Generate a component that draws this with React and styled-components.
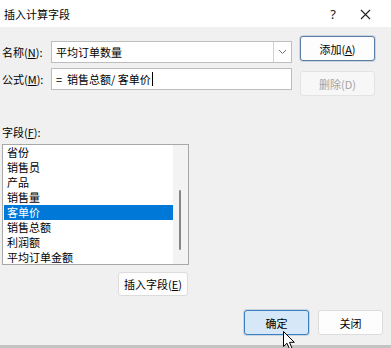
import styled, { createGlobalStyle } from "styled-components";

// ----------- Global -----------
const GlobalStyle = createGlobalStyle`
  html, body {
    margin: 0;
    padding: 0;
    background: #f0f0f0;
  }
  body {
    font-family: "Noto Sans CJK SC", "Noto Sans", "Liberation Sans", sans-serif;
    font-size: 11px;
    color: #000;
  }
`;

// ----------- Styled components -----------
const Dialog = styled.div`
  width: 391px;
  height: 348px;
  display: flex;
  flex-direction: column;
  overflow: hidden;
  position: relative;
`;

const TitleBar = styled.div`
  height: 27px;
  background: #ffffff;
  display: flex;
  align-items: center;
  padding-left: 4px;
  box-sizing: border-box;
`;

const Title = styled.div`
  flex: 1;
  font-size: 11px;
`;

const TitleIcon = styled.div`
  width: ${(p) => p.w}px;
  text-align: center;
  font-size: ${(p) => p.size}px;
  font-family: "Noto Sans", sans-serif;
  color: #222;
`;

const Body = styled.div`
  flex: 1;
  background: #f0f0f0;
  display: flex;
  flex-direction: column;
  padding-left: 2px;
  position: relative;
`;

const TopSection = styled.div`
  display: flex;
`;

const FormRows = styled.div`
  display: flex;
  flex-direction: column;
  gap: 5px;
  padding-top: 14px;
`;

const FormRow = styled.div`
  display: flex;
  align-items: center;
`;

const Label = styled.label`
  width: 49px;
  white-space: nowrap;
  u {
    text-decoration: underline;
  }
`;

const Field = styled.div`
  width: 241px;
  height: 22px;
  box-sizing: border-box;
  background: #fff;
  border: 1px solid #bdbdbd;
  display: flex;
  align-items: center;
`;

const FieldText = styled.div`
  flex: 1;
  padding-left: 4px;
  white-space: nowrap;
  display: flex;
  align-items: center;
`;

const Caret = styled.span`
  display: inline-block;
  width: 1px;
  height: 14px;
  background: #000;
  margin-left: 1px;
`;

const DropPart = styled.div`
  width: 17px;
  height: 100%;
  border-left: 1px solid #d0d0d0;
  display: flex;
  align-items: center;
  justify-content: center;
`;

const SideButtons = styled.div`
  display: flex;
  flex-direction: column;
  gap: 10px;
  padding-top: 9px;
  margin-left: 8px;
`;

const Button = styled.button`
  width: ${(p) => p.w || 75}px;
  height: ${(p) => p.h || 25}px;
  box-sizing: border-box;
  font-family: inherit;
  font-size: 11px;
  padding: 0;
  border-radius: 3px;
  background: ${(p) => (p.hot ? "#d6e8f8" : p.disabled ? "#f7f7f7" : "#fdfdfd")};
  border: 1px solid
    ${(p) => (p.hot ? "#3c7fc0" : p.primary ? "#5b7da3" : p.disabled ? "#e3e3e3" : "#dcdcdc")};
  color: ${(p) => (p.disabled ? "#a3a3a3" : "#000")};
  box-shadow: ${(p) => (p.primary || p.hot ? "0 0 0 1px rgba(90,130,180,0.25)" : "none")};
  u {
    text-decoration: underline;
  }
`;

const FieldsLabel = styled.div`
  margin-top: 28px;
  height: 16px;
  line-height: 16px;
  u {
    text-decoration: underline;
  }
`;

const ListBox = styled.div`
  margin-top: 4px;
  width: 187px;
  height: 121px;
  box-sizing: border-box;
  border: 1px solid #a8a8a8;
  background: #fff;
  display: flex;
`;

const ListItems = styled.div`
  flex: 1;
  display: flex;
  flex-direction: column;
  padding-left: 1px;
`;

const ListItem = styled.div`
  height: 15px;
  line-height: 15px;
  padding-left: 3px;
  white-space: nowrap;
  background: ${(p) => (p.selected ? "#0078d7" : "transparent")};
  color: ${(p) => (p.selected ? "#fff" : "#000")};
`;

const ScrollTrack = styled.div`
  width: 15px;
  background: #f3f3f3;
  position: relative;
`;

const ScrollThumb = styled.div`
  position: absolute;
  left: 6px;
  top: 45px;
  width: 2px;
  height: 60px;
  border-radius: 1px;
  background: #868686;
`;

const InsertRow = styled.div`
  width: 186px;
  display: flex;
  justify-content: flex-end;
  margin-top: 7px;
`;

const BottomRow = styled.div`
  display: flex;
  justify-content: flex-end;
  gap: 9px;
  padding-right: 8px;
  margin-top: 14px;
`;

const BottomEdge = styled.div`
  position: absolute;
  left: 0;
  right: 0;
  bottom: 0;
  height: 3px;
  background: #c4c4c4;
`;

const Pointer = styled.svg`
  position: absolute;
  left: 283px;
  top: 331px;
`;

// ------------ Data ------------------
const fields = ["省份", "销售员", "产品", "销售量", "客单价", "销售总额", "利润额", "平均订单金额"];

// ------------ App Component ------------------
const App = () => {
  return (
    <>
      <GlobalStyle />
      <Dialog>
        <TitleBar>
          <Title>插入计算字段</Title>
          <TitleIcon w={12} size={13}>?</TitleIcon>
          <TitleIcon w={52} size={17}>
            <svg width="11" height="11" viewBox="0 0 11 11">
              <path d="M1 1 L10 10 M10 1 L1 10" stroke="#222" strokeWidth="1.1" />
            </svg>
          </TitleIcon>
        </TitleBar>
        <Body>
          <TopSection>
            <FormRows>
              <FormRow>
                <Label>
                  名称(<u>N</u>):
                </Label>
                <Field>
                  <FieldText>平均订单数量</FieldText>
                  <DropPart>
                    <svg width="9" height="6" viewBox="0 0 9 6">
                      <path d="M1 1 L4.5 4.5 L8 1" fill="none" stroke="#777" strokeWidth="1" />
                    </svg>
                  </DropPart>
                </Field>
              </FormRow>
              <FormRow>
                <Label>
                  公式(<u>M</u>):
                </Label>
                <Field>
                  <FieldText>
                    =&nbsp;&nbsp;销售总额/ 客单价
                    <Caret />
                  </FieldText>
                </Field>
              </FormRow>
            </FormRows>
            <SideButtons>
              <Button primary>
                添加(<u>A</u>)
              </Button>
              <Button disabled>删除(D)</Button>
            </SideButtons>
          </TopSection>

          <FieldsLabel>
            字段(<u>F</u>):
          </FieldsLabel>
          <ListBox>
            <ListItems>
              {fields.map((f) => (
                <ListItem key={f} selected={f === "客单价"}>
                  {f}
                </ListItem>
              ))}
            </ListItems>
            <ScrollTrack>
              <ScrollThumb />
            </ScrollTrack>
          </ListBox>
          <InsertRow>
            <Button w={70} h={24}>
              插入字段(<u>E</u>)
            </Button>
          </InsertRow>

          <BottomRow>
            <Button w={65} h={25} hot>
              确定
            </Button>
            <Button w={65} h={25}>
              关闭
            </Button>
          </BottomRow>
          <BottomEdge />
        </Body>
        <Pointer width="13" height="20" viewBox="0 0 13 20">
          <path
            d="M0.5 0.5 L0.5 15.5 L4 12.2 L6.6 18.3 L9 17.3 L6.5 11.3 L11.3 11.3 Z"
            fill="#fff"
            stroke="#000"
            strokeWidth="1"
            strokeLinejoin="round"
          />
        </Pointer>
      </Dialog>
    </>
  );
};

export default App;
